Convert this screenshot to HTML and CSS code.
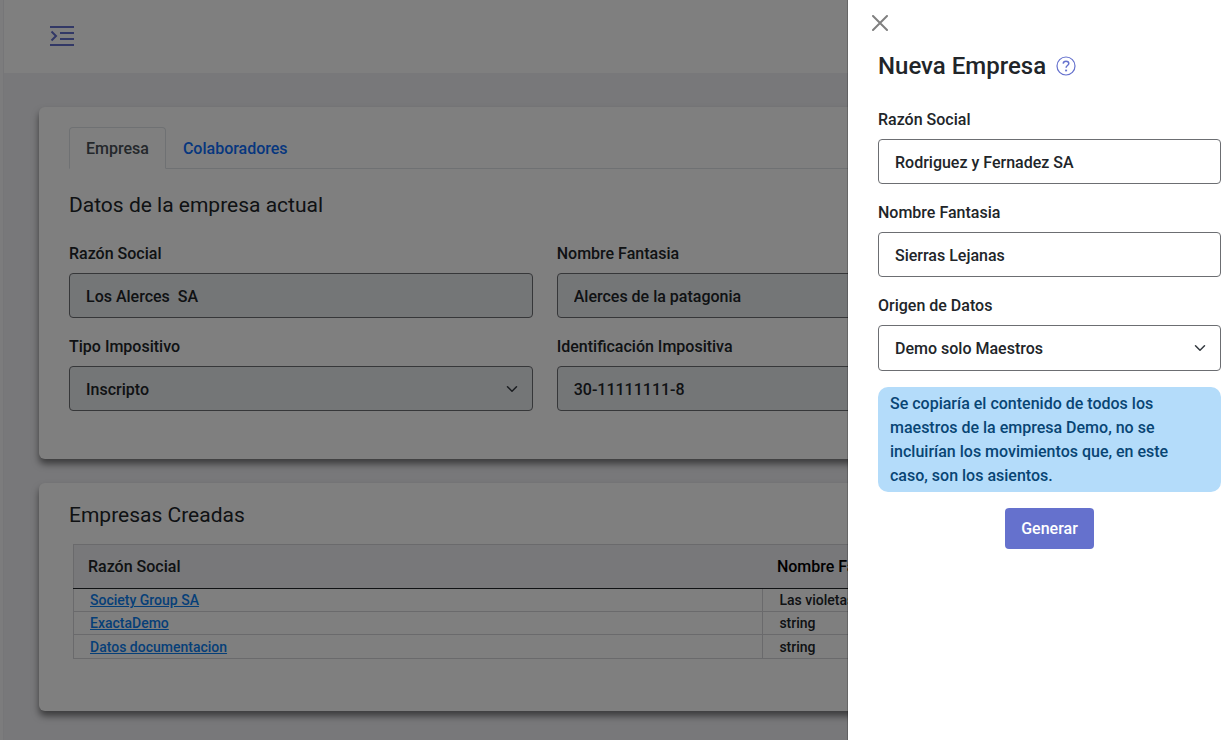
FILE: index.html
```html
<!DOCTYPE html>
<html lang="es">
<head>
<meta charset="utf-8">
<meta name="viewport" content="width=device-width, initial-scale=1">
<title>Nueva Empresa</title>
<link rel="stylesheet" href="styles.css">
</head>
<body>
<div class="layout">
  <div class="sidebar-edge"></div>
  <div class="page">
    <header class="topbar">
      <button class="icon-button menu-button" type="button" aria-label="Abrir menú">
        <svg width="24" height="20" viewBox="0 0 24 20" fill="none" stroke="currentColor" stroke-width="2">
          <path d="M0 1h24M10 7h14M10 13h14M0 19h24M1.500 5.500L6 10l-4.500 4.500"/>
        </svg>
      </button>
    </header>
    <main class="content">
      <section class="card card-company">
        <nav class="tabs">
          <a class="tab tab-active" href="#empresa">Empresa</a>
          <a class="tab" href="#colaboradores">Colaboradores</a>
        </nav>
        <h2 class="card-title">Datos de la empresa actual</h2>
        <div class="fields">
          <div class="field">
            <label for="razon">Razón Social</label>
            <input class="control" id="razon" type="text" value="Los Alerces  SA" disabled>
          </div>
          <div class="field">
            <label for="fantasia">Nombre Fantasia</label>
            <input class="control" id="fantasia" type="text" value="Alerces de la patagonia" disabled>
          </div>
          <div class="field field-first">
            <label for="tipo">Tipo Impositivo</label>
            <div class="select-wrap">
              <select class="control" id="tipo" disabled><option>Inscripto</option></select>
              <svg class="chevron" width="12" height="12" viewBox="0 0 16 16"><path d="m2 5 6 6 6-6"/></svg>
            </div>
          </div>
          <div class="field">
            <label for="identificacion">Identificación Impositiva</label>
            <input class="control" id="identificacion" type="text" value="30-11111111-8" disabled>
          </div>
        </div>
      </section>
      <section class="card card-list">
        <h2 class="card-title">Empresas Creadas</h2>
        <table class="companies">
          <thead>
            <tr><th class="col-name">Razón Social</th><th class="col-alias">Nombre Fantasia</th></tr>
          </thead>
          <tbody>
            <tr><td><a href="#society">Society Group SA</a></td><td>Las violetas</td></tr>
            <tr><td><a href="#exacta">ExactaDemo</a></td><td>string</td></tr>
            <tr><td><a href="#datos">Datos documentacion</a></td><td>string</td></tr>
          </tbody>
        </table>
      </section>
    </main>
  </div>
</div>
<div class="backdrop"></div>
<aside class="drawer" role="dialog" aria-labelledby="drawer-title">
  <button class="icon-button close-button" type="button" aria-label="Cerrar">
    <svg width="16" height="16" viewBox="0 0 16 16" fill="none" stroke="currentColor" stroke-width="2" stroke-linecap="round"><path d="M1 1l14 14M15 1L1 15"/></svg>
  </button>
  <form class="drawer-body">
    <div class="drawer-heading">
      <h1 class="drawer-title" id="drawer-title">Nueva Empresa</h1>
      <button class="icon-button help-button" type="button" aria-label="Ayuda">
        <svg width="20" height="20" viewBox="0 0 20 20" fill="none" stroke="currentColor"><circle cx="10" cy="10" r="9" stroke-width="1.200"/><path d="M7.200 7.600C7.300 6 8.400 5.200 10 5.200s2.800.9 2.800 2.300c0 2-2.700 2-2.700 4.200" stroke-width="1.500"/><path d="M9.100 14.500h2" stroke-width="1.700"/></svg>
      </button>
    </div>
    <div class="field">
      <label for="nueva-razon">Razón Social</label>
      <input class="control" id="nueva-razon" type="text" value="Rodriguez y Fernadez SA">
    </div>
    <div class="field">
      <label for="nueva-fantasia">Nombre Fantasia</label>
      <input class="control" id="nueva-fantasia" type="text" value="Sierras Lejanas">
    </div>
    <div class="field">
      <label for="origen">Origen de Datos</label>
      <div class="select-wrap">
        <select class="control" id="origen"><option>Demo solo Maestros</option></select>
        <svg class="chevron" width="12" height="12" viewBox="0 0 16 16"><path d="m2 5 6 6 6-6"/></svg>
      </div>
    </div>
    <p class="notice">Se copiaría el contenido de todos los maestros de la empresa Demo, no se incluirían los movimientos que, en este caso, son los asientos.</p>
    <button class="submit" type="button">Generar</button>
  </form>
</aside>
</body>
</html>
```

FILE: styles.css
```css
* { box-sizing: border-box; }

body {
  margin: 0;
  overflow: hidden;
  background: #f0f0f4;
  color: #212529;
  font: 500 16px/24px Roboto, "Noto Sans", sans-serif;
}

h1, h2, p { margin: 0; }

.layout { display: flex; min-height: 100vh; }
.sidebar-edge { flex: none; width: 4px; border-right: 1px solid #ececf0; background: #f8f8fa; }
.page { flex: 1; min-width: 0; }

.topbar { display: flex; align-items: center; height: 73px; padding: 0 46px 2px; background: #fff; }
.icon-button { display: flex; padding: 0; border: 0; background: none; cursor: pointer; }
.menu-button { color: #6571cd; }

.content { display: grid; gap: 24px; padding: 34px 0 28px 35px; }
.card { padding: 20px 28px 48px 30px; border-radius: 6px; background: #fff; box-shadow: 0 5px 7px rgba(0, 0, 0, .5); }
.card-list { padding-bottom: 52px; }
.card-title { font-size: 21px; font-weight: 400; line-height: 24px; }

.tabs { display: flex; border-bottom: 1px solid #dee2e6; }
.tab { margin-bottom: -1px; padding: 9px 16px 7px; border: 1px solid transparent; border-radius: 4px 4px 0 0; color: #0d6efd; text-decoration: none; }
.tab-active { border-color: #dee2e6 #dee2e6 #fff; background: #fff; color: #495057; }
.card-company .card-title { margin: 24px 0; }
.card-list .card-title { margin-bottom: 17px; }

.fields { display: grid; grid-template-columns: 3fr 3fr 1fr; gap: 16px 24px; }
.field-first { grid-column-start: 1; }
.field label { display: block; margin-bottom: 7px; padding-top: 1px; }

.control { display: block; width: 100%; height: 45px; padding: 2px 16px 0; border: 1px solid #6c6e72; border-radius: 4px; background: #fff; color: #212529; font: inherit; opacity: 1; appearance: none; }
.control:disabled { background: #e9ecef; }
.select-wrap { position: relative; }
.chevron { position: absolute; top: 17px; right: 15px; fill: none; stroke: #343a40; stroke-width: 2; stroke-linecap: round; stroke-linejoin: round; pointer-events: none; }

.companies { width: calc(100% - 8px); margin: 0 4px; border: 1px solid #d5d5d9; border-collapse: collapse; table-layout: fixed; }
.companies th { height: 44px; padding: 0 14px; border-bottom: 1px solid #212529; background: #f0f0f4; font-weight: 500; text-align: left; }
.companies .col-name { width: 61.5%; }
.companies .col-alias { color: #000; }
.companies td { height: 23px; padding: 0 16px; border: 1px solid #d5d5d9; font-size: 14px; line-height: 22px; }
.companies tbody tr:first-child td { border-top-color: #212529; }
.companies tbody tr:last-child td { height: 24px; }
.companies a { color: #0d7ef0; }

.backdrop { position: fixed; inset: 0; background: rgba(0, 0, 0, .5); }

.drawer { position: fixed; top: 0; right: 0; bottom: 0; width: 380px; padding: 15px 6px 15px 30px; border-left: 1px solid rgba(0, 0, 0, .2); background: #fff; background-clip: padding-box; }
.close-button { margin-left: -6px; color: #808080; }
.drawer-body { display: flex; flex-direction: column; gap: 16px; margin-top: 20px; }
.drawer-heading { display: flex; align-items: center; gap: 10px; margin-bottom: 10px; }
.drawer-title { font-size: 24px; font-weight: 500; line-height: 30px; }
.help-button { color: #6571cd; }
.drawer select.control { height: 46px; }
.notice { padding: 5px 12px 4px; border-radius: 10px; background: #b4dcfa; color: #084574; }
.submit { align-self: center; height: 41px; padding: 0 16px; border: 0; border-radius: 4px; background: #6571cd; color: #fff; font: inherit; cursor: pointer; }
```
